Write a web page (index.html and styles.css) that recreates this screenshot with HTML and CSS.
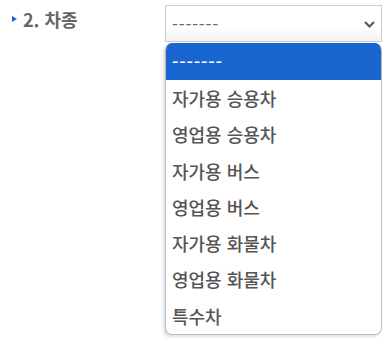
FILE: index.html
```html
<!DOCTYPE html>
<html lang="ko">
<head>
<meta charset="utf-8">
<link rel="stylesheet" href="styles.css">
</head>
<body>
<div class="row">
  <div class="label"><span class="tri"></span><span>2. 차종</span></div>
  <div class="field">
    <div class="select">
      <span class="value">-------</span>
      <svg class="chev" width="11" height="7" viewBox="0 0 11 7"><path d="M1 1 L5.5 5.5 L10 1" fill="none" stroke="#555" stroke-width="2"/></svg>
    </div>
    <ul class="menu">
      <li class="opt sel">-------</li>
      <li class="opt">자가용 승용차</li>
      <li class="opt">영업용 승용차</li>
      <li class="opt">자가용 버스</li>
      <li class="opt">영업용 버스</li>
      <li class="opt">자가용 화물차</li>
      <li class="opt">영업용 화물차</li>
      <li class="opt">특수차</li>
    </ul>
  </div>
</div>
</body>
</html>
```
FILE: styles.css
```css
html, body {
  margin: 0;
  padding: 0;
  background: #fff;
}
body {
  font-family: "Noto Sans CJK KR", "Noto Sans", sans-serif;
  color: #555;
  width: 392px;
  height: 343px;
  overflow: hidden;
}
.row {
  display: flex;
  padding: 5px 0 0 12px;
}
.label {
  width: 153px;
  display: flex;
  align-items: center;
  height: 28px;
  font-size: 18px;
  font-weight: 700;
  color: #666;
  gap: 6px;
}
.tri {
  width: 0;
  height: 0;
  border-left: 5px solid #1a66d1;
  border-top: 3px solid transparent;
  border-bottom: 3px solid transparent;
}
.field {
  position: relative;
  width: 217px;
}
.select {
  box-sizing: border-box;
  height: 37px;
  border: 1px solid #ccc;
  background: linear-gradient(#fff 60%, #f2f2f2);
  display: flex;
  align-items: center;
  justify-content: space-between;
  padding: 0 6px 0 6px;
  font-size: 17px;
}
.value {
  color: #666;
  letter-spacing: 0.8px;
}
.chev {
  margin-top: 2px;
}
.menu {
  position: absolute;
  left: 0;
  top: 38px;
  width: 217px;
  box-sizing: border-box;
  margin: 0;
  padding: 0;
  list-style: none;
  background: #fff;
  border: 1px solid #bbb;
  border-top: none;
  border-radius: 7px;
  overflow: hidden;
  box-shadow: -2px 2px 3px rgba(0,0,0,0.12);
}
.opt {
  height: 36.25px;
  line-height: 36px;
  padding-left: 6px;
  font-size: 18px;
  font-weight: 500;
  color: #555;
  white-space: nowrap;
}
.opt.sel {
  background: #1a66d1;
  color: #fff;
  height: 37px;
  letter-spacing: 0.8px;
}
```
